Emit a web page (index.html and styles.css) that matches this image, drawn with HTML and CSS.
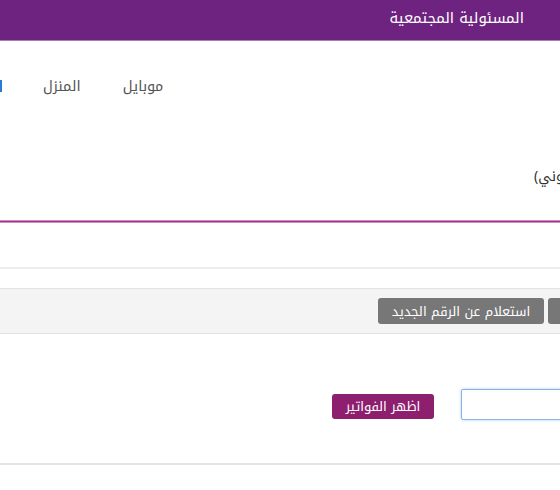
FILE: index.html
```html
<!DOCTYPE html>
<html lang="ar">
<head>
<meta charset="utf-8">
<link rel="stylesheet" href="styles.css">
</head>
<body>
<div class="page">
  <header class="topbar">
    <span class="topbar-title">المسئولية المجتمعية</span>
  </header>
  <nav class="nav">
    <span class="nav-active"></span>
    <a class="nav-item nav-home">المنزل</a>
    <a class="nav-item">موبايل</a>
  </nav>
  <div class="note"><span class="note-text">(خدمة الدفع الإلكتروني)</span></div>
  <div class="rule"></div>
  <div class="strip"></div>
  <div class="tabs">
    <button class="tab">استعلام عن الرقم الجديد</button>
    <button class="tab">استعلام عن الفواتير</button>
  </div>
  <div class="form">
    <button class="show">اظهر الفواتير</button>
    <input class="field" type="text">
  </div>
  <div class="bottom"></div>
</div>
</body>
</html>
```
FILE: styles.css
```css
html, body {
  margin: 0;
  padding: 0;
  background: #fff;
  overflow: hidden;
}
.page {
  width: 560px;
  height: 490px;
  overflow: hidden;
  font-family: "Noto Kufi Arabic", "Droid Arabic Kufi", "DejaVu Sans", sans-serif;
}
.topbar {
  height: 40px;
  background: #6f2380;
  border-bottom: 1px solid #a57fb2;
  display: flex;
  align-items: center;
  justify-content: flex-end;
  padding-right: 36px;
}
.topbar-title {
  direction: rtl;
  color: #fff;
  font-size: 14.8px;
  padding-bottom: 4px;
}
.nav {
  display: flex;
  align-items: center;
  height: 90px;
}
.nav-active {
  width: 2px;
  height: 12px;
  background: #2d7ad6;
}
.nav-item {
  direction: rtl;
  color: #555;
  font-size: 14.5px;
}
.nav-home {
  margin-left: 41px;
  margin-right: 42px;
}
.note {
  display: flex;
  height: 89px;
  padding-left: 534px;
  align-items: flex-start;
}
.note-text {
  direction: rtl;
  white-space: nowrap;
  font-size: 14px;
  color: #333;
  margin-top: 32px;
}
.rule {
  height: 1px;
  background: #a3338c;
  border-top: 1px solid #c98fbd;
  border-bottom: 1px solid #c98fbd;
}
.strip {
  height: 44px;
  border-bottom: 2px solid #ececec;
}
.tabs {
  margin-top: 19px;
  height: 44px;
  background: #f4f4f4;
  border-top: 1px solid #e3e3e3;
  border-bottom: 1px solid #e3e3e3;
  display: flex;
  align-items: center;
  padding-left: 378px;
  gap: 4px;
  white-space: nowrap;
}
.tab {
  direction: rtl;
  flex: none;
  height: 26px;
  padding: 0 11px;
  border: 0;
  border-radius: 3px;
  background: #777;
  color: #fff;
  font-family: inherit;
  font-size: 13px;
  width: 166px;
}
.form {
  height: 129px;
  display: flex;
  align-items: center;
  padding-left: 332px;
  border-bottom: 2px solid #e3e3e3;
}
.show {
  direction: rtl;
  flex: none;
  width: 102px;
  height: 25px;
  border: 0;
  border-radius: 3px;
  background: #8e1f6f;
  color: #fff;
  font-family: inherit;
  font-size: 13px;
  padding: 0;
  margin-top: 15px;
}
.field {
  flex: none;
  margin-left: 27px;
  width: 200px;
  height: 31px;
  box-sizing: border-box;
  border: 1px solid #86b5e3;
  box-shadow: 0 0 3px #a9cdf0;
  border-radius: 2px;
  margin-top: 11px;
  padding: 0;
}
.bottom {
  height: 30px;
}
```
